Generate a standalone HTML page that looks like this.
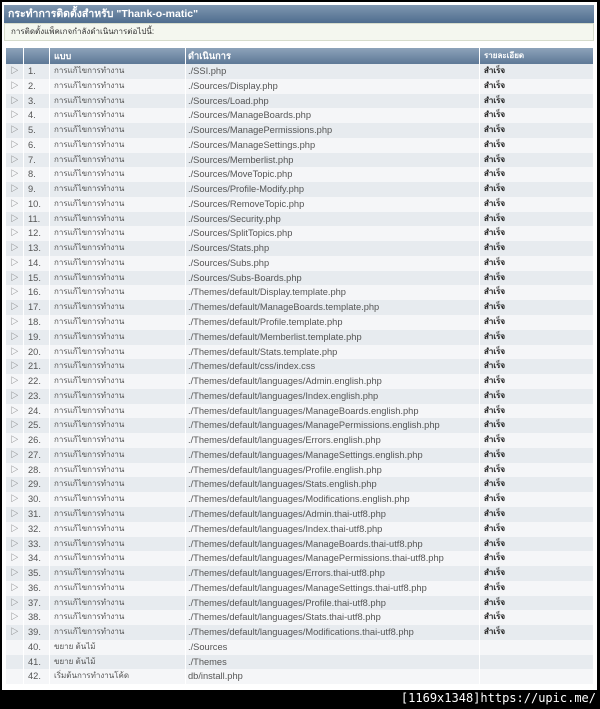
<!DOCTYPE html><html><head><meta charset="utf-8"><style>
body{margin:0;width:600px;height:709px;background:#000;position:relative;overflow:hidden;font-family:"Liberation Sans","Noto Sans CJK SC",sans-serif}
#p{position:absolute;left:2px;top:2px;width:595px;height:688px;background:#fff}
#t{position:absolute;left:2px;top:3px;width:590px;height:18px;background:linear-gradient(#7f97b1,#4f6d8e);color:#fff;font-weight:bold;font-size:10.5px;line-height:18px;padding-left:4px;box-sizing:border-box}
#i{position:absolute;left:2px;top:21px;width:590px;height:18px;background:#f4f7ef;border:1px solid #d6dccc;box-sizing:border-box;font-size:8px;line-height:16px;padding-left:6px;color:#333}
#tb{position:absolute;left:4px;top:46px;width:588px}
.r{display:flex;height:14.78px;font-size:9.3px;line-height:14.78px;color:#555}
.r div{border-right:1px solid #fff;box-sizing:border-box;white-space:nowrap;overflow:hidden}
.h{background:linear-gradient(#8da3ba,#5d7896);color:#fff;font-weight:bold;height:16px;line-height:16px}
.w{background:#f5f6f8}.g{background:#e7ebef}
.a{width:18px;text-align:center;font-size:8px;color:#666}.n{width:26px;padding-left:4px}.k{width:136px;padding-left:4px;font-size:8px}.c{width:294px;padding-left:2px}.s{flex:1;padding-left:4px;font-weight:bold;font-size:8px;color:#222}
#f{position:absolute;right:4px;top:691px;color:#fff;font-family:"DejaVu Sans Mono",monospace;font-size:12px}
</style></head><body><div id="p"><div id="t">กระทำการติดตั้งสำหรับ "Thank-o-matic"</div><div id="i">การติดตั้งแพ็คเกจกำลังดำเนินการต่อไปนี้:</div>
<div id="tb"><div class="r h"><div class="a"></div><div class="n"></div><div class="k" style="font-size:9px">แบบ</div><div class="c">ดำเนินการ</div><div class="s" style="color:#fff">รายละเอียด</div></div>
<script>
var f=["./SSI.php","./Sources/Display.php","./Sources/Load.php","./Sources/ManageBoards.php","./Sources/ManagePermissions.php","./Sources/ManageSettings.php","./Sources/Memberlist.php","./Sources/MoveTopic.php","./Sources/Profile-Modify.php","./Sources/RemoveTopic.php","./Sources/Security.php","./Sources/SplitTopics.php","./Sources/Stats.php","./Sources/Subs.php","./Sources/Subs-Boards.php","./Themes/default/Display.template.php","./Themes/default/ManageBoards.template.php","./Themes/default/Profile.template.php","./Themes/default/Memberlist.template.php","./Themes/default/Stats.template.php","./Themes/default/css/index.css","./Themes/default/languages/Admin.english.php","./Themes/default/languages/Index.english.php","./Themes/default/languages/ManageBoards.english.php","./Themes/default/languages/ManagePermissions.english.php","./Themes/default/languages/Errors.english.php","./Themes/default/languages/ManageSettings.english.php","./Themes/default/languages/Profile.english.php","./Themes/default/languages/Stats.english.php","./Themes/default/languages/Modifications.english.php","./Themes/default/languages/Admin.thai-utf8.php","./Themes/default/languages/Index.thai-utf8.php","./Themes/default/languages/ManageBoards.thai-utf8.php","./Themes/default/languages/ManagePermissions.thai-utf8.php","./Themes/default/languages/Errors.thai-utf8.php","./Themes/default/languages/ManageSettings.thai-utf8.php","./Themes/default/languages/Profile.thai-utf8.php","./Themes/default/languages/Stats.thai-utf8.php","./Themes/default/languages/Modifications.thai-utf8.php","./Sources","./Themes","db/install.php"];
var h="";for(var i=0;i<42;i++){var m=i<39;h+='<div class="r '+(i%2?'w':'g')+'"><div class="a">'+(m?'&#9655;':'')+'</div><div class="n">'+(i+1)+'.</div><div class="k">'+(m?'การแก้ไขการทำงาน':(i<41?'ขยาย ต้นไม้':'เริ่มต้นการทำงานโค้ด'))+'</div><div class="c">'+f[i]+'</div><div class="s">'+(m?'สำเร็จ':'')+'</div></div>';}
document.write(h);
</script></div></div><div id="f">[1169x1348]https://upic.me/</div></body></html>
